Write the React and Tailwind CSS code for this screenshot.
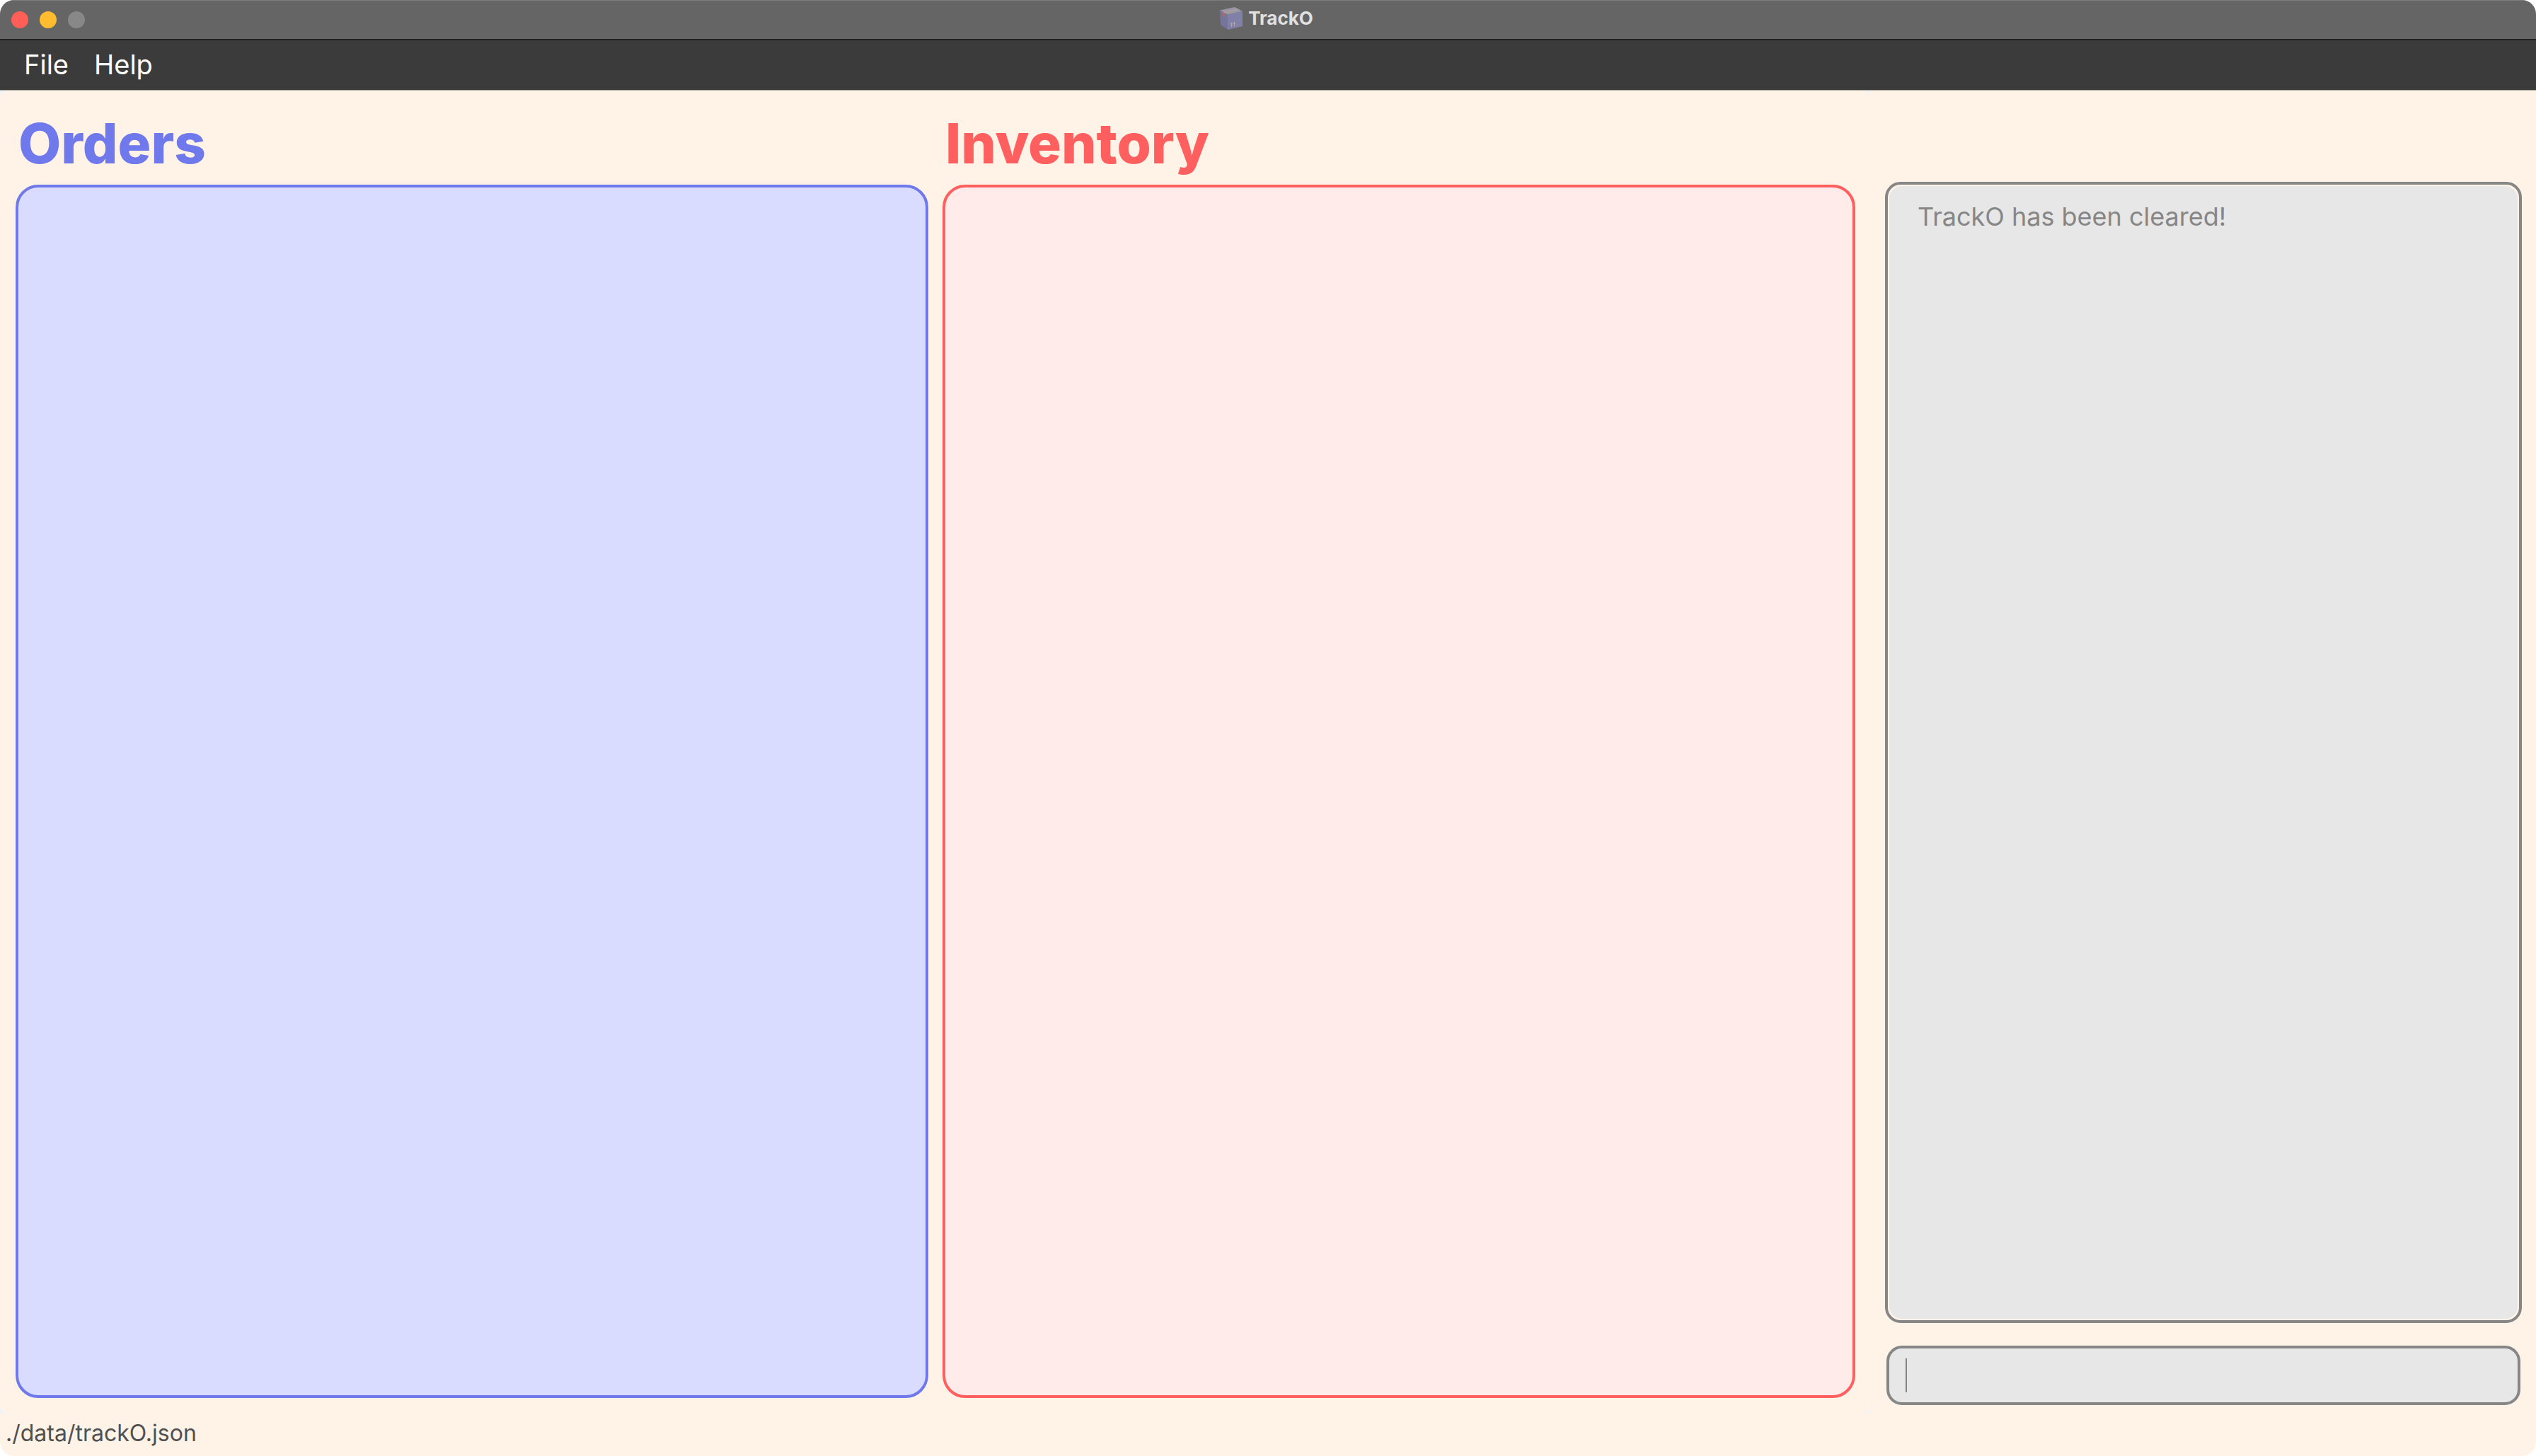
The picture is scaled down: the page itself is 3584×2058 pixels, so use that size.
import React from "react";

function BoxIcon() {
  return (
    <svg viewBox="0 0 32 32" className="size-8" aria-hidden="true">
      <path d="M0 4.5 L21 0 L32 6 L11 11 Z" fill="#9696a6" />
      <path d="M0 4.5 L11 11 L11 32 L1 25 Z" fill="#74749c" />
      <path d="M11 11 L32 6 L32 27 L11 32 Z" fill="#8080a8" />
      <path d="M4 7 L25 2 L28 4 L7 9 Z" fill="#aa9a9c" />
      <path d="M4 7 L7 8.8 L7 14 L5.5 12.5 L4 13 Z" fill="#a3706c" />
      <path d="M16.500 28 V23 M15.500 24.500 L16.500 22.500 L17.500 24.500 M20.500 27 V22 M19.500 23.500 L20.500 21.500 L21.500 23.500" fill="none" stroke="#b5a5a5" strokeWidth="1.200" />
    </svg>
  );
}

function TitleBar() {
  return (
    <header className="grid h-[57px] grid-cols-3 items-center border-t border-b-2 border-t-[#7b7b7b] border-b-[#212121] bg-[#656565] px-4 pb-px">
      <div className="flex gap-4">
        <button aria-label="Close" className="size-6 rounded-full bg-[#ff5f57]" />
        <button aria-label="Minimize" className="size-6 rounded-full bg-[#febc2e]" />
        <button aria-label="Zoom" className="size-6 rounded-full bg-[#888888]" />
      </div>
      <div className="flex items-center justify-center gap-2 pr-1 pb-1">
        <BoxIcon />
        <h1 className="text-[26px] leading-8 font-bold text-[#e0e0e0]">TrackO</h1>
      </div>
    </header>
  );
}

function MenuBar() {
  return (
    <nav className="flex h-[71px] items-center gap-9 border-b border-[#a09c98] bg-[#3b3b3b] px-[34px] pb-0.5 text-[38px] leading-[56px] text-white">
      <button>File</button>
      <button>Help</button>
    </nav>
  );
}

export default function App() {
  return (
    <div className="bg-white font-['Inter',sans-serif]">
      <div className="flex h-screen flex-col overflow-hidden rounded-[20px] bg-[#fff2e6]">
        <TitleBar />
        <MenuBar />
        <main className="grid min-h-0 flex-1 grid-cols-[2644fr_940fr] bg-[#f3f3f3]">
          <div className="flex min-w-0 gap-5 rounded-[14px] bg-[#fff2e6] px-[22px] pb-[22px]">
            <section className="flex flex-1 flex-col">
              <h2 className="px-1 pt-[29px] pb-3 text-[78px] leading-[92px] font-extrabold text-[#7079ec]">Orders</h2>
              <div className="flex-1 rounded-[32px] border-4 border-[#7079ec] bg-[#d9dbff]" />
            </section>
            <section className="flex flex-1 flex-col">
              <h2 className="px-1 pt-[29px] pb-3 text-[78px] leading-[92px] font-extrabold text-[#ff5f5e]">Inventory</h2>
              <div className="flex-1 rounded-[32px] border-4 border-[#ff5f5e] bg-[#ffebea]" />
            </section>
          </div>
          <section className="flex min-w-0 flex-col gap-8 bg-[#fff2e6] pt-[129px] pr-5 pb-3 pl-5">
            <div className="flex flex-1 rounded-[22px] border-4 border-[#868686] p-0.5">
              <textarea
                readOnly
                aria-label="Result"
                defaultValue="TrackO has been cleared!"
                className="w-full resize-none rounded-[18px] bg-[#e7e7e7] px-10 py-[18px] text-[36px] leading-[50px] text-[#868686] outline-none"
              />
            </div>
            <div className="mx-0.5 flex h-[84px] items-center rounded-[22px] border-4 border-[#868686] bg-[#e7e7e7] px-[23px]">
              <div className="h-12 w-0.5 bg-[#868686]" />
              <input aria-label="Command" className="h-full min-w-0 flex-1 bg-transparent text-[36px] text-[#868686] outline-none" />
            </div>
          </section>
        </main>
        <footer className="flex h-[60px] items-center px-2 pb-1 text-[32px] leading-[44px] text-[#505050]">./data/trackO.json</footer>
      </div>
    </div>
  );
}
